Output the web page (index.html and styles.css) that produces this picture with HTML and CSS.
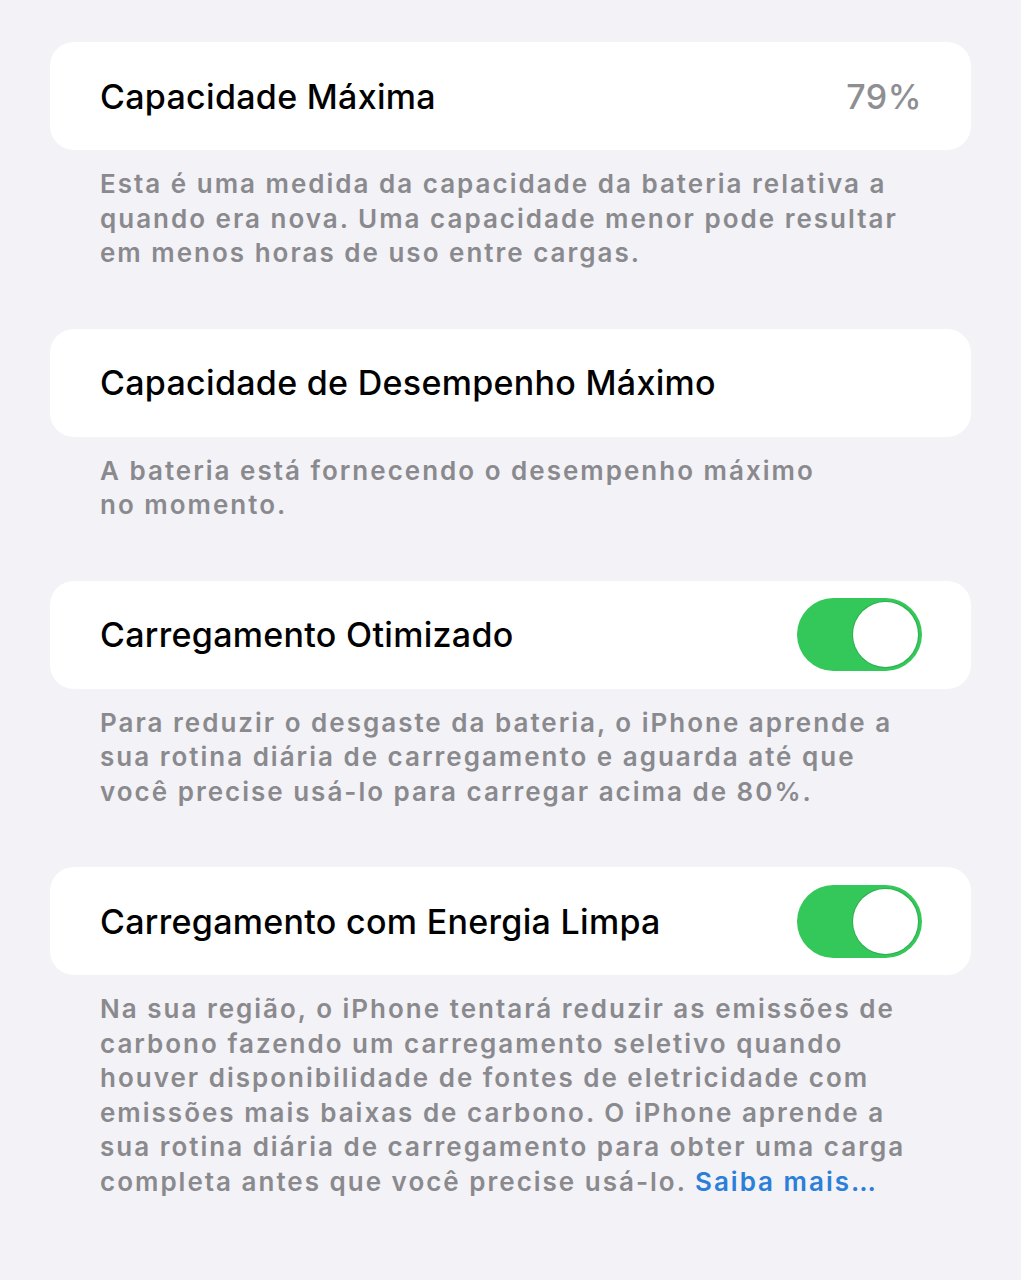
FILE: index.html
```html
<!DOCTYPE html>
<html lang="pt-BR">
<head>
<meta charset="utf-8">
<title>Saúde da Bateria</title>
<link rel="stylesheet" href="styles.css">
</head>
<body>
<main class="settings">
  <section class="group">
    <div class="cell">
      <span class="cell-title">Capacidade Máxima</span>
      <span class="cell-value">79%</span>
    </div>
    <p class="footer">Esta é uma medida da capacidade da bateria relativa a quando era nova. Uma capacidade menor pode resultar em menos horas de uso entre cargas.</p>
  </section>

  <section class="group">
    <div class="cell">
      <span class="cell-title">Capacidade de Desempenho Máximo</span>
    </div>
    <p class="footer narrow">A bateria está fornecendo o desempenho máximo no momento.</p>
  </section>

  <section class="group">
    <div class="cell">
      <span class="cell-title">Carregamento Otimizado</span>
      <span class="switch on" role="switch" aria-checked="true"><span class="knob"></span></span>
    </div>
    <p class="footer">Para reduzir o desgaste da bateria, o iPhone aprende a sua rotina diária de carregamento e aguarda até que você precise usá-lo para carregar acima de 80%.</p>
  </section>

  <section class="group">
    <div class="cell">
      <span class="cell-title">Carregamento com Energia Limpa</span>
      <span class="switch on" role="switch" aria-checked="true"><span class="knob"></span></span>
    </div>
    <p class="footer">Na sua região, o iPhone tentará reduzir as emissões de carbono fazendo um carregamento seletivo quando houver disponibilidade de fontes de eletricidade com emissões mais baixas de carbono. O iPhone aprende a sua rotina diária de carregamento para obter uma carga completa antes que você precise usá-lo. <a class="link" href="#">Saiba mais…</a></p>
  </section>
</main>
</body>
</html>
```

FILE: styles.css
```css
html, body {
  margin: 0;
  padding: 0;
  background: #f2f2f7;
}

body {
  font-family: "Inter", "Noto Sans", sans-serif;
  -webkit-font-smoothing: antialiased;
}

.settings {
  padding: 42px 50px 0 50px;
  display: flex;
  flex-direction: column;
}

.group {
  display: flex;
  flex-direction: column;
}

.cell {
  height: 108px;
  box-sizing: border-box;
  background: #ffffff;
  border-radius: 24px;
  padding: 0 49px 0 50px;
  display: flex;
  align-items: center;
  justify-content: space-between;
}

.cell-title {
  font-size: 34px;
  font-weight: 500;
  color: #000;
  letter-spacing: 0.3px;
}

.cell-value {
  font-size: 34px;
  font-weight: 500;
  color: #8e8e93;
  letter-spacing: 0.5px;
}

.footer {
  margin: 0;
  padding: 17px 50px 58px 50px;
  font-size: 26px;
  line-height: 34.5px;
  letter-spacing: 2px;
  color: #8a8a8e;
  font-weight: 600;
}

.footer.narrow {
  padding-right: 120px;
}

.link {
  color: #2b7fd8;
  text-decoration: none;
}

.switch {
  width: 125px;
  height: 73px;
  border-radius: 37px;
  background: #34c759;
  display: flex;
  align-items: center;
  justify-content: flex-end;
  padding: 4px;
  box-sizing: border-box;
}

.knob {
  width: 65px;
  height: 65px;
  border-radius: 50%;
  background: #ffffff;
  box-shadow: 0 0 0 1px rgba(40, 160, 70, 0.6);
}
```
